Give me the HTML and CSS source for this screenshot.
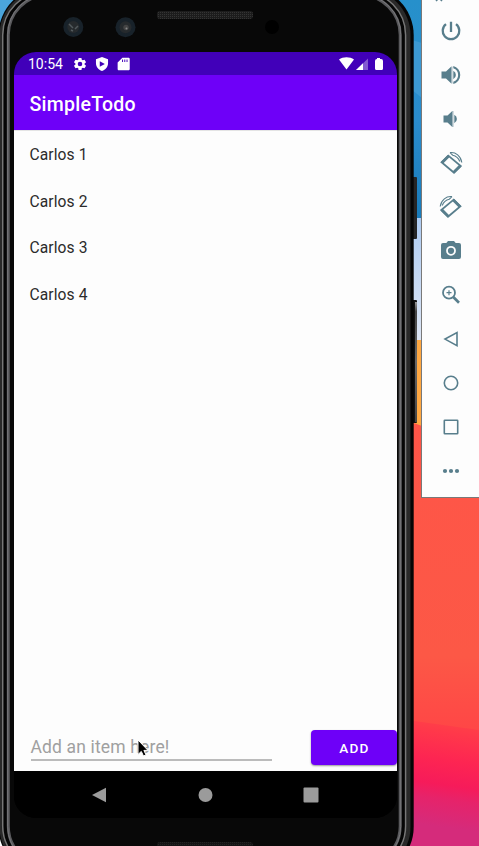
FILE: index.html
```html
<!DOCTYPE html>
<html lang="en">
<head>
<meta charset="utf-8">
<title>SimpleTodo</title>
<link rel="stylesheet" href="styles.css">
</head>
<body>
<div class="desktop">
  <svg class="backdrop" viewBox="0 0 479 846" aria-hidden="true">
    <defs>
      <linearGradient id="sky" x1="0" y1="0" x2="0" y2="1"><stop offset="0" stop-color="#2690cb"/><stop offset=".55" stop-color="#2a8ccd"/><stop offset="1" stop-color="#197bb9"/></linearGradient>
      <linearGradient id="haze" x1="0" y1="0" x2="0" y2="1"><stop offset="0" stop-color="#aecbf1"/><stop offset="1" stop-color="#dce5f4"/></linearGradient>
      <linearGradient id="coral" x1="0" y1="420" x2="0" y2="735" gradientUnits="userSpaceOnUse"><stop offset="0" stop-color="#ff5548"/><stop offset=".75" stop-color="#fc5846"/><stop offset="1" stop-color="#ff4546"/></linearGradient>
      <linearGradient id="sunset" x1="420" y1="712" x2="405" y2="822" gradientUnits="userSpaceOnUse"><stop offset="0" stop-color="#ff4546"/><stop offset=".15" stop-color="#ff384a"/><stop offset=".4" stop-color="#fd2552"/><stop offset=".62" stop-color="#f61b5a"/><stop offset=".75" stop-color="#e6236a"/><stop offset="1" stop-color="#d52b7b"/></linearGradient>
      <linearGradient id="key" x1="0" y1="0" x2="0" y2="1"><stop offset="0" stop-color="#999"/><stop offset=".08" stop-color="#444"/><stop offset=".5" stop-color="#666"/><stop offset="1" stop-color="#444"/></linearGradient>
      <pattern id="mesh" width="2" height="2" patternUnits="userSpaceOnUse"><rect width="2" height="2" fill="#1c1c1c"/><rect width="1" height="1" fill="#343434"/></pattern>
    </defs>
    <rect width="479" height="220" fill="url(#sky)"/>
    <rect width="20" height="30" fill="#4ba5db"/>
    <path d="M412 40L422 43V98L412 90Z" fill="#3c99d3"/>
    <rect x="400" y="218" width="79" height="122" fill="url(#haze)"/>
    <rect x="400" y="340" width="79" height="90" fill="#ffa842"/>
    <path d="M400 418L422 426L479 440V846H400Z" fill="url(#coral)"/>
    <path d="M400 719L479 730V846H400Z" fill="url(#sunset)"/>
    <rect x="411" y="177" width="6" height="62" rx="1" fill="#252525"/>
    <rect x="411" y="300" width="6" height="123" rx="1" fill="#111"/>
    <rect x="415" y="302" width="2" height="120" fill="url(#key)"/>
    <rect x="-1.5" y="-13" width="415.2" height="888" rx="48" fill="#050505"/>
    <rect x="-.5" y="-11" width="411" height="884" rx="46" fill="#292929"/>
    <rect x="1.5" y="-8.5" width="405" height="879" rx="44" fill="#222"/>
    <rect x="2.7" y="-8" width="402.9" height="877" rx="43" fill="#050505" stroke="#777" stroke-width="1.5"/>
    <rect x="8.3" y="-5" width="391.9" height="871" rx="40" fill="#080808" stroke="#59595c" stroke-width="3"/>
    <rect x="7.7" y="-5.5" width="393" height="872" rx="40" fill="none" stroke="#77777a"/>
    <rect x="157" y="11" width="96" height="8" rx="3" fill="url(#mesh)"/>
    <rect x="157" y="842" width="96" height="8" rx="3" fill="url(#mesh)" opacity=".6"/>
    <g fill="#18222a"><circle cx="73.3" cy="27" r="10"/><circle cx="125.5" cy="27.3" r="10"/></g>
    <g fill="#262a2d"><circle cx="73.3" cy="27" r="6"/><circle cx="125.5" cy="27.3" r="6"/></g>
    <path d="M69 24l4 4M75 29l3-3M71 30l2 1" stroke="#52595c" stroke-width="1.5"/>
    <circle cx="126" cy="27.5" r="2.7" fill="#444"/><circle cx="126.5" cy="28.5" r="1" fill="#888"/>
    <circle cx="272" cy="27" r="7" fill="#000"/>
  </svg>

  <main class="screen">
    <header class="status">
      <span class="time">10:54</span>
      <svg class="status-icon" viewBox="1 1 22 22"><path d="M19.14 12.94a7 7 0 0 0 0-1.88l2.03-1.58a.5.5 0 0 0 .12-.61l-1.92-3.32a.5.5 0 0 0-.59-.22l-2.39.96a7 7 0 0 0-1.62-.94l-.36-2.54a.5.5 0 0 0-.48-.41h-3.84a.5.5 0 0 0-.47.41l-.36 2.54a7 7 0 0 0-1.62.94l-2.39-.96a.5.5 0 0 0-.59.22L2.74 8.87a.5.5 0 0 0 .12.61l2.03 1.58a7 7 0 0 0 0 1.88l-2.03 1.58a.5.5 0 0 0-.12.61l1.92 3.32c.12.22.37.29.59.22l2.39-.96c.5.38 1.03.7 1.62.94l.36 2.54c.05.24.24.41.48.41h3.84c.24 0 .44-.17.47-.41l.36-2.54a7 7 0 0 0 1.62-.94l2.39.96c.22.08.47 0 .59-.22l1.92-3.32a.5.5 0 0 0-.12-.61zM12 15.6a3.6 3.6 0 1 1 0-7.2 3.6 3.6 0 0 1 0 7.2z"/></svg>
      <svg class="status-icon" viewBox="1 1 22 22"><path fill-rule="evenodd" d="M12 1L2.500 4.500V11c0 5.500 4 10.500 9.500 12 5.500-1.500 9.500-6.500 9.500-12V4.500zM8.500 7.500v9l8-4.500z"/></svg>
      <svg class="status-icon" viewBox="2 1 22 22"><path fill-rule="evenodd" d="M20 2h-9.500L3 9.500V20c0 1.200.8 2 2 2h15c1.100 0 2-.8 2-2V4c0-1.200-.9-2-2-2zM10 5h1.500v4H10zm3.500 0H15v4h-1.500zm3.500 0h1.500v4H17z"/></svg>
      <svg class="signals" viewBox="0 0 46 14"><path d="M0 2.500C4-.5 11-.5 15 2.500L7.500 12.500Z"/><path d="M29 1.500V13H17Z" opacity=".35"/><path d="M24 6.300V13H17Z"/><path d="M38 1h3v1h1q2 0 2 2v7.500q0 1.500-1.500 1.500h-5q-1.500 0-1.500-1.500V4q0-2 2-2z"/></svg>
    </header>
    <h1 class="appbar">SimpleTodo</h1>
    <ul class="items">
      <li>Carlos 1</li>
      <li>Carlos 2</li>
      <li>Carlos 3</li>
      <li>Carlos 4</li>
    </ul>
    <div class="entry">
      <div class="field">Add an item here!</div>
      <button class="add">ADD</button>
    </div>
    <nav class="navbar">
      <svg viewBox="0 0 16 16"><path d="M15 .7V15.300L1 8Z"/></svg>
      <svg viewBox="0 0 16 16"><circle cx="8.500" cy="8" r="7"/></svg>
      <svg viewBox="0 0 16 16"><rect x=".5" y=".5" width="15" height="15" rx="1"/></svg>
    </nav>
  </main>

  <aside class="tools">
    <svg class="close" viewBox="0 0 8 8"><path d="M1 1L7 7M7 1L1 7"/></svg>
    <svg class="line bold" viewBox="0 0 24 24"><path d="M12 2.800V13M7 5.200A8.300 8.300 0 1 0 17 5.200"/></svg>
    <svg viewBox="0 0 24 24"><path d="M2.500 8.500V15.500H7L12.300 20.500V3.500L7 8.500Z"/><path d="M12.300 3.500h1.200v17h-1.200z" opacity=".5"/><path d="M14.300 7.800a4.700 4.700 0 0 1 0 8.400z"/><path d="M14.300 3v2.200a7.200 7.200 0 0 1 0 13.600V21a9.300 9.300 0 0 0 0-18z"/></svg>
    <svg viewBox="0 0 24 24"><path d="M4.500 8.500V15.500H8.500L13.300 20V4L8.500 8.500Z"/><path d="M13.300 4h1.200v16h-1.200z" opacity=".5"/><path d="M15.300 7.800a4.700 4.700 0 0 1 0 8.400z"/></svg>
    <svg class="line" viewBox="0 0 24 24"><path d="M2.500 11.300L9.300 4.600L21.800 15L15 21.800Z"/><path class="heavy" d="M3 11.700L9.700 5M14.500 21.400L21.200 14.700"/><path class="thin" d="M11 1.600C16.500 .8 22 5 22.800 11.500M11 1.600L13.700 4.200C17 4.800 19.500 7 20.800 10.500"/></svg>
    <svg class="line mirror" viewBox="0 0 24 24"><path d="M2.500 11.300L9.300 4.600L21.800 15L15 21.800Z"/><path class="heavy" d="M3 11.700L9.700 5M14.500 21.400L21.200 14.700"/><path class="thin" d="M11 1.600C16.500 .8 22 5 22.800 11.500M11 1.600L13.700 4.200C17 4.800 19.500 7 20.800 10.500"/></svg>
    <svg viewBox="0 0 24 24"><path fill-rule="evenodd" d="M9 2L7.300 4H4Q2 4 2 6V18Q2 20 4 20H20Q22 20 22 18V6Q22 4 20 4H16.700L15 2ZM12 6.900a4.900 4.900 0 1 1 0 9.800 4.900 4.900 0 0 1 0-9.800z"/><circle cx="12" cy="11.800" r="3.100"/></svg>
    <svg class="line" viewBox="0 0 24 24"><circle cx="10" cy="9.700" r="6"/><path class="zoom-plus" d="M10 7.200v5M7.500 9.700h5"/><path class="heavy" d="M14.300 14L20 19.700"/></svg>
    <svg class="line light" viewBox="0 0 24 24"><path d="M18 5.500V18.700L6 12.100Z"/></svg>
    <svg class="line light" viewBox="0 0 24 24"><circle cx="12" cy="12" r="6.700"/></svg>
    <svg class="line light" viewBox="0 0 24 24"><rect x="5.300" y="5.300" width="13.400" height="13.400" rx=".5"/></svg>
    <svg viewBox="0 0 24 24"><circle cx="6" cy="12" r="2.100"/><circle cx="12" cy="12" r="2.100"/><circle cx="18" cy="12" r="2.100"/></svg>
  </aside>

  <svg class="pointer" viewBox="0 0 12 18"><path d="M1 1V15.500L4.300 12.400L6.500 17L9 15.900L6.900 11.400H11Z"/></svg>
</div>
</body>
</html>
```

FILE: styles.css
```css
* { box-sizing: border-box; }

body {
  margin: 0;
  font-family: Roboto, "Liberation Sans", sans-serif;
}

.desktop {
  position: relative;
  display: flex;
  align-items: flex-start;
  justify-content: space-between;
  width: 479px;
  height: 846px;
  overflow: hidden;
  padding-left: 14px;
}

.backdrop {
  position: absolute;
  inset: 0;
  width: 479px;
  height: 846px;
}

.screen {
  position: relative;
  display: flex;
  flex-direction: column;
  width: 383px;
  height: 766px;
  margin-top: 52px;
  overflow: hidden;
  border-radius: 22px;
  background: #000;
}

.status {
  display: flex;
  align-items: center;
  gap: 8px;
  height: 23px;
  padding: 1px 12px 0 14px;
  background: #4100b9;
  color: #fff;
}

.time {
  width: 37px;
  font-size: 14px;
}

.status-icon {
  width: 14px;
  height: 14px;
  fill: #fff;
}

.signals {
  width: 46px;
  height: 14px;
  margin-left: auto;
  fill: #fff;
}

.appbar {
  display: flex;
  align-items: center;
  height: 55px;
  margin: 0;
  padding: 3px 15.500px 0;
  background: #6e00f8;
  color: #fff;
  font-size: 19.500px;
  font-weight: 500;
  letter-spacing: .25px;
}

.items {
  flex: 1;
  margin: 0;
  padding: 0;
  border-top: 1px solid #e4e4e4;
  background: #fdfdfd;
  list-style: none;
}

.items li {
  display: flex;
  align-items: center;
  height: 46.800px;
  padding: 1px 15.500px 0;
  color: #2b2b2b;
  font-size: 15.600px;
  letter-spacing: .1px;
}

.entry {
  display: flex;
  justify-content: space-between;
  height: 41px;
  padding-left: 17px;
  background: #fdfdfd;
}

.field {
  width: 241px;
  height: 31px;
  border-bottom: 2px solid #bbb;
  color: #a0a0a0;
  font-size: 17.500px;
  line-height: 34px;
  letter-spacing: .15px;
  text-indent: -.5px;
}

.add {
  width: 86px;
  height: 35px;
  padding: 0 0 0 1px;
  border: 0;
  border-radius: 4px;
  background: #6e00f8;
  box-shadow: 0 1px 2px #0006;
  color: #fff;
  font: 500 13.600px Roboto, sans-serif;
  letter-spacing: 1.200px;
}

.navbar {
  display: flex;
  align-items: center;
  gap: 90px;
  height: 47px;
  padding: 1px 0 0 77px;
  background: #000;
}

.navbar svg {
  width: 16px;
  height: 16px;
  fill: #9b9b9b;
}

.tools {
  position: relative;
  display: flex;
  flex-direction: column;
  align-items: center;
  gap: 20px;
  width: 58px;
  height: 498px;
  padding-top: 19px;
  border: solid #797979;
  border-width: 0 0 1px 1px;
  background: #fdfdfd;
}

.tools svg {
  flex: none;
  width: 24px;
  height: 24px;
  fill: #587e8c;
}

.tools .close {
  position: absolute;
  top: -6px;
  left: 13px;
  width: 8px;
  height: 8px;
  stroke: #587e8c;
  stroke-width: 1.500px;
}

.tools .line {
  fill: none;
  stroke: #587e8c;
  stroke-width: 1.800px;
}

.tools .bold { stroke-width: 2.300px; }
.tools .light { stroke-width: 1.600px; }
.tools .mirror { transform: scaleX(-1); }
.heavy { stroke-width: 2.700px; }
.thin { stroke-width: 1.100px; }
.zoom-plus { stroke-width: 1.200px; }

.pointer {
  position: absolute;
  top: 739px;
  left: 137px;
  width: 12px;
  height: 18px;
  fill: #000;
  stroke: #fff;
  stroke-width: 1px;
}
```
